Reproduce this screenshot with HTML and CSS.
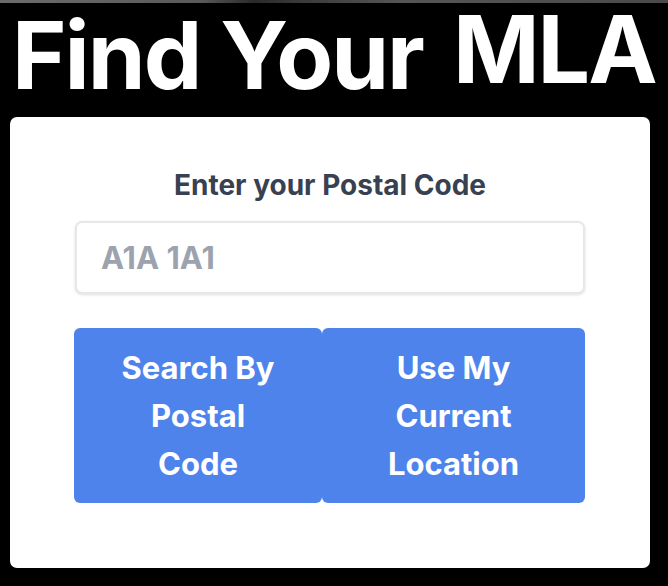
FILE: index.html
```html
<!DOCTYPE html>
<html lang="en">
<head>
<meta charset="utf-8">
<title>Find Your MLA</title>
<link rel="stylesheet" href="styles.css">
</head>
<body>
<div class="topbar"></div>
<h1 class="title">Find Your <span class="mla">MLA</span></h1>
<main class="card">
  <label class="label" for="postal">Enter your Postal Code</label>
  <input id="postal" class="input" type="text" placeholder="A1A 1A1">
  <div class="actions">
    <button class="btn btn-left" type="button">Search By Postal Code</button>
    <button class="btn btn-right" type="button">Use My Current Location</button>
  </div>
</main>
</body>
</html>
```

FILE: styles.css
```css
* { box-sizing: border-box; }
html, body { margin: 0; padding: 0; }
body {
  background: #000;
  font-family: Inter, "Noto Sans", "Liberation Sans", sans-serif;
  width: 668px;
  height: 586px;
  overflow: hidden;
}
.topbar {
  height: 3px;
  background: linear-gradient(90deg, #6b6b6b 0%, #5a5a5a 30%, #2a2a2a 38%, #3a3a3a 45%, #555 60%, #4a4a4a 100%);
}
.title {
  margin: 0;
  padding: 0 0 0 12px;
  height: 114px;
  color: #fff;
  font-weight: 700;
  font-size: 93px;
  line-height: 92px;
  letter-spacing: -2px;
  white-space: nowrap;
}
.mla {
  margin-left: 10px;
  vertical-align: 6px;
}
.card {
  margin: 0 18px 0 10px;
  background: #fff;
  border-radius: 7px;
  height: 451px;
  padding: 50px 65px 0 65px;
  display: flex;
  flex-direction: column;
  align-items: stretch;
}
.label {
  display: block;
  text-align: center;
  color: #374151;
  font-weight: 700;
  font-size: 28px;
  line-height: 36px;
}
.input {
  margin-top: 18px;
  height: 73px;
  border: 2px solid #e5e7eb;
  border-radius: 7px;
  box-shadow: 0 1px 3px rgba(0,0,0,0.12);
  padding: 0 24px;
  font-family: inherit;
  font-size: 31px;
  font-weight: 700;
  color: #374151;
  outline: none;
}
.input::placeholder { color: #9ca3af; opacity: 1; }
.actions {
  margin: 34px -2px 0 -1px;
  display: flex;
}
.btn {
  background: #4f83ec;
  color: #fff;
  border: 0;
  border-radius: 6px;
  font-family: inherit;
  font-weight: 700;
  font-size: 31px;
  line-height: 48px;
  padding: 16px 34px;
  height: 175px;
  text-align: center;
}
.btn-left { flex: 0 0 248px; }
.btn-right { flex: 0 0 263px; }
```
